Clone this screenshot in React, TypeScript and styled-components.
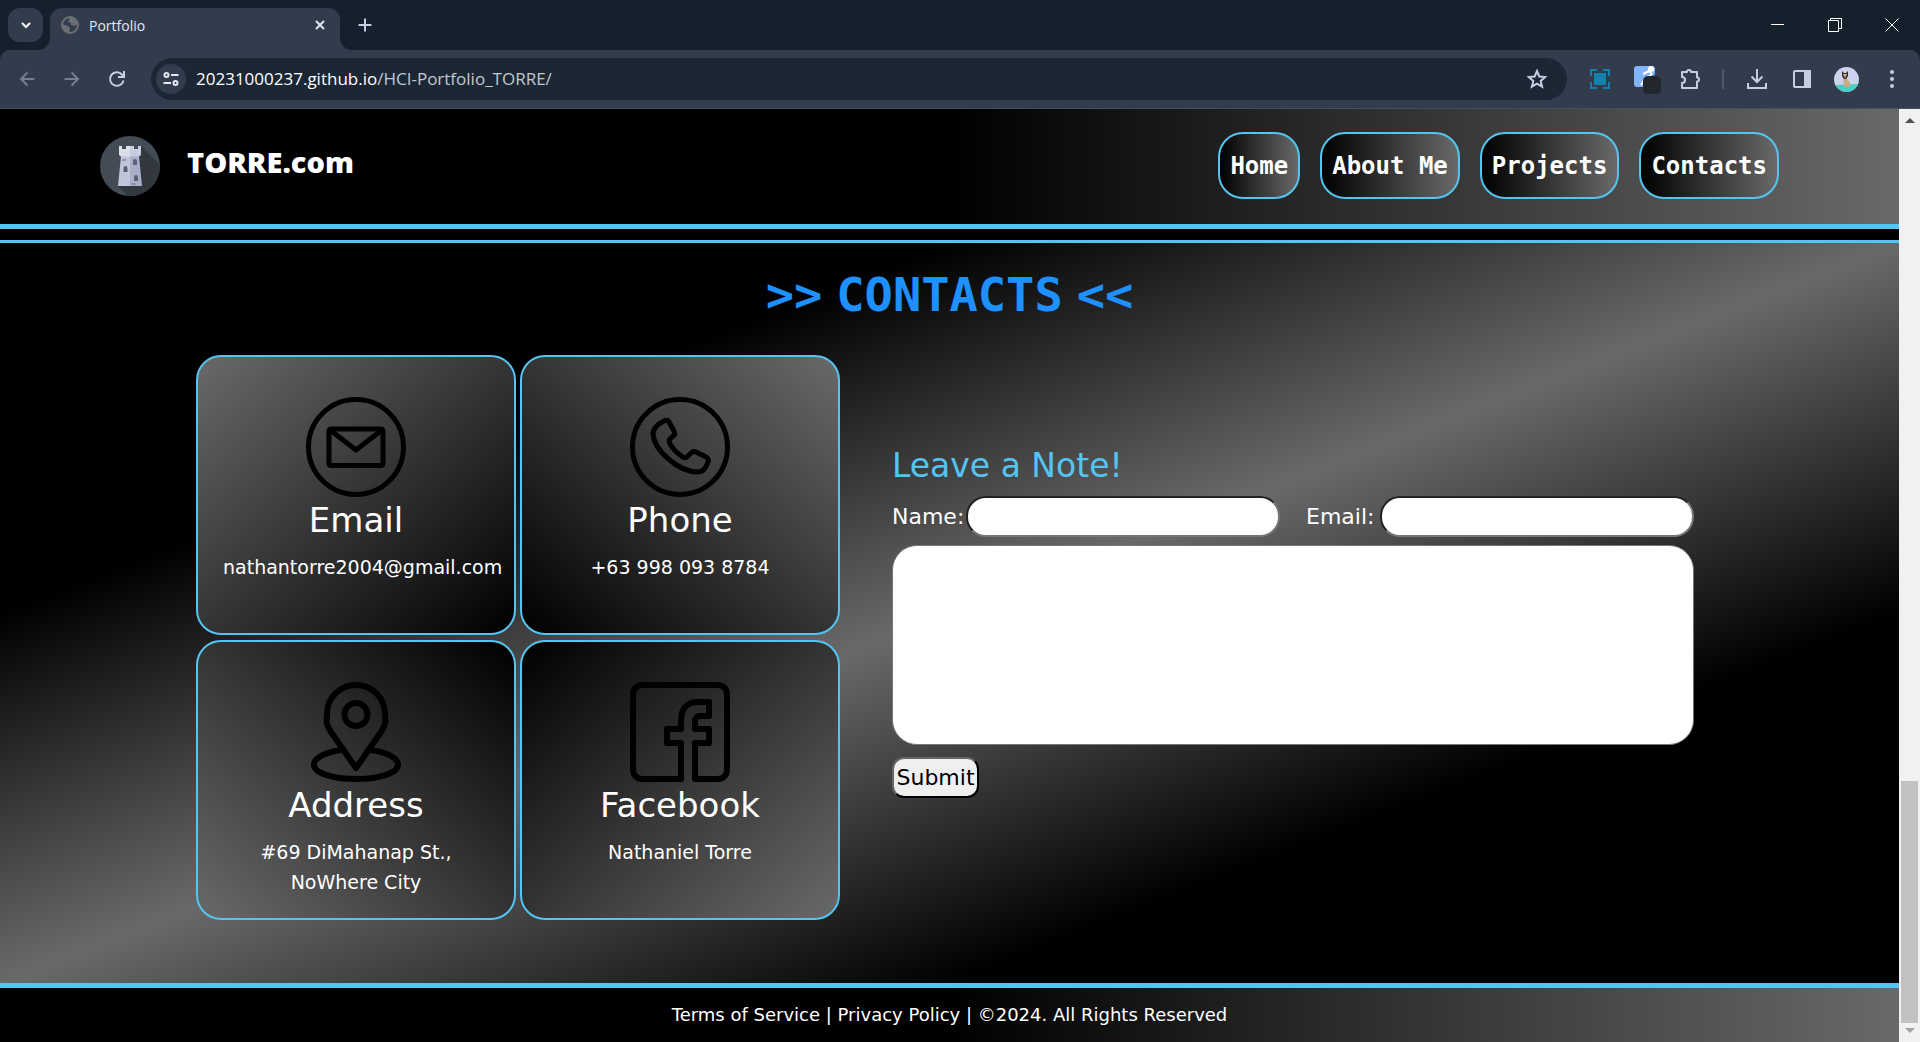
import React from "react";
import styled, { createGlobalStyle, css } from "styled-components";

const sky = "#54c5f1";
const gray = "#696969";
const pixelSans = `"DejaVu Sans", sans-serif`;
const pixelMono = `"DejaVu Sans Mono", monospace`;

const GlobalStyle = createGlobalStyle`
  * { box-sizing: border-box; }
  body { margin: 0; background: #000; }
  h1, h2, h3, p { margin: 0; font-weight: 400; }
  button, input, textarea { font: inherit; }
`;

const Window = styled.div`
  display: flex;
  flex-direction: column;
  min-height: 100vh;
  font-family: ${pixelSans};
  color: #fff;
`;

/* ---------- browser chrome ---------- */

const TabStrip = styled.div`
  display: flex;
  align-items: flex-end;
  height: 50px;
  padding-left: 8px;
  background: #15202d;
  font-family: "Open Sans", sans-serif;
`;

const PlainButton = styled.button`
  display: flex;
  align-items: center;
  justify-content: center;
  padding: 0;
  border: 0;
  background: none;
  color: #c3cfe3;
`;

const TabSearch = styled(PlainButton)`
  align-self: center;
  width: 35px;
  height: 34px;
  border-radius: 12px;
  background: #323c4d;
  color: #fff;
`;

const Tab = styled.div`
  position: relative;
  display: flex;
  align-items: center;
  width: 290px;
  height: 42px;
  margin-left: 7px;
  padding: 0 10px 8px 11px;
  border-radius: 12px 12px 0 0;
  background: #323c4d;
  &::before,
  &::after {
    content: "";
    position: absolute;
    bottom: 0;
    width: 12px;
    height: 12px;
  }
  &::before {
    left: -12px;
    background: radial-gradient(circle at 0 0, transparent 12px, #323c4d 12px);
  }
  &::after {
    right: -12px;
    background: radial-gradient(circle at 100% 0, transparent 12px, #323c4d 12px);
  }
`;

const TabTitle = styled.span`
  flex: 1;
  margin-left: 10px;
  color: #e3e8f0;
  font-size: 14px;
`;

const TabClose = styled(PlainButton)`
  width: 20px;
  height: 20px;
  color: #e3e8f0;
`;

const NewTab = styled(PlainButton)`
  align-self: center;
  width: 30px;
  height: 30px;
  margin-left: 10px;
`;

const WindowControls = styled.div`
  display: flex;
  align-self: stretch;
  margin-left: auto;
`;

const WindowButton = styled(PlainButton)`
  width: 57px;
  color: #fff;
`;

const ToolbarBack = styled.div`
  background: #15202d;
`;

const Toolbar = styled.div`
  display: flex;
  align-items: center;
  height: 59px;
  padding: 0 6px 0 12px;
  border-bottom: 1px solid #4a4e55;
  border-radius: 10px 10px 0 0;
  background: #323c4d;
`;

const NavIcons = styled.div`
  display: flex;
  gap: 15px;
`;

const NavIcon = styled(PlainButton)<{ $dim?: boolean }>`
  width: 30px;
  height: 30px;
  color: ${(p) => (p.$dim ? "#747e8f" : "#c3cfe3")};
`;

const AddressBar = styled.div`
  display: flex;
  flex: 1;
  align-items: center;
  height: 42px;
  margin: 0 10px 0 19px;
  padding: 0 20px 0 5px;
  border-radius: 21px;
  background: #1c2736;
`;

const SiteInfo = styled(PlainButton)`
  width: 30px;
  height: 30px;
  border-radius: 50%;
  background: #323c4d;
  color: #e3e8f0;
`;

const Url = styled.span`
  flex: 1;
  margin-left: 10px;
  color: #c3c8d1;
  font: 17px/24px "Open Sans", sans-serif;
  b {
    color: #fff;
    font-weight: 400;
  }
`;

const ToolIcon = styled(PlainButton)`
  width: 45px;
  height: 36px;
`;

const Divider = styled.span`
  width: 2px;
  height: 20px;
  margin: 0 10px;
  background: #4d5869;
`;

/* ---------- page ---------- */

const Viewport = styled.div`
  display: flex;
  flex: 1;
`;

const Page = styled.div`
  display: flex;
  flex: 1;
  flex-direction: column;
`;

const Header = styled.header`
  display: flex;
  align-items: center;
  justify-content: space-between;
  height: 120px;
  padding: 0 120px 2px 100px;
  border-bottom: 5px solid ${sky};
  background: linear-gradient(to right, #000 50%, ${gray});
`;

const Brand = styled.a`
  display: flex;
  align-items: center;
  gap: 27px;
  color: #fff;
  text-decoration: none;
`;

const BrandName = styled.span`
  padding-bottom: 8px;
  font: 800 29px/40px "Open Sans", sans-serif;
`;

const Nav = styled.nav`
  display: flex;
  gap: 20px;
`;

const NavLink = styled.a`
  display: flex;
  align-items: center;
  height: 67px;
  padding: 0 10px;
  border: 2px solid ${sky};
  border-radius: 25px;
  background: linear-gradient(to right, #000, ${gray});
  color: #fff;
  font: bold 24px/30px ${pixelMono};
  text-decoration: none;
`;

const Contacts = styled.main`
  flex: 1;
  margin-top: 11px;
  border-top: 3px solid ${sky};
  background: linear-gradient(to bottom right, #000 25%, ${gray} 50%, #000 75%);
`;

const Title = styled.h1`
  display: flex;
  justify-content: center;
  gap: 14px;
  padding: 22px 0 30px;
  color: #1e90ff;
  font: bold 47px/60px ${pixelMono};
`;

const Columns = styled.div`
  display: flex;
  gap: 52px;
  padding: 0 205px 63px 196px;
`;

const Cards = styled.div`
  display: grid;
  grid-template-columns: repeat(2, 320px);
  gap: 5px 4px;
`;

const Card = styled.article<{ $toward: string }>`
  height: 280px;
  padding: 40px 25px 0;
  border: 2px solid ${sky};
  border-radius: 25px;
  background: linear-gradient(${(p) => p.$toward}, ${gray}, #000);
  text-align: center;
`;

const CardTitle = styled.h2`
  font-size: 34px;
  line-height: 46px;
`;

const CardText = styled.p`
  padding-top: 9px;
  font-size: 19px;
  line-height: 30px;
  white-space: pre-line;
`;

const Form = styled.form`
  display: flex;
  flex: 1;
  flex-direction: column;
  align-items: flex-start;
  min-width: 0;
  padding-top: 86px;
`;

const FormTitle = styled.h3`
  margin-bottom: 5px;
  color: ${sky};
  font-size: 33px;
  line-height: 50px;
`;

const Fields = styled.div`
  display: flex;
  gap: 26px;
  width: 100%;
`;

const Field = styled.label`
  display: flex;
  flex: 1;
  align-items: center;
  justify-content: space-between;
  font-size: 22px;
`;

const TextInput = styled.input`
  width: 314px;
  height: 41px;
  padding: 0 14px;
  border: 2px inset #767676;
  border-radius: 20px;
  background: #fff;
`;

const Note = styled.textarea`
  width: 100%;
  height: 200px;
  margin: 8px 0 12px;
  padding: 14px;
  border: 1px solid #767676;
  border-radius: 25px;
  background: #fff;
  resize: none;
`;

const Submit = styled.button`
  width: 87px;
  height: 41px;
  padding: 0;
  border: 2px solid;
  border-color: #666 #000 #000 #666;
  border-radius: 12px;
  background: #efefef;
  color: #000;
  font-size: 22px;
`;

const Footer = styled.footer`
  padding: 12px 0;
  border-top: 5px solid ${sky};
  background: linear-gradient(to right, #000 50%, ${gray});
  font-size: 18px;
  line-height: 30px;
  text-align: center;
`;

const Scrollbar = styled.div`
  display: flex;
  flex-direction: column;
  align-items: center;
  justify-content: space-between;
  width: 21px;
  padding: 9px 0;
  background: #f1f1f1;
`;

const Thumb = styled.div`
  width: 17px;
  height: 242px;
  margin: auto 0 5px;
  background: #c1c1c1;
`;

const Arrow = styled.span<{ $down?: boolean }>`
  border: 5px solid transparent;
  ${(p) =>
    p.$down
      ? css`
          border-top-color: #a3a3a3;
          border-bottom: 0;
        `
      : css`
          border-bottom-color: #505050;
          border-top: 0;
        `}
`;

/* ---------- drawings ---------- */

const Line = styled.svg`
  display: block;
  fill: none;
  stroke: currentColor;
  stroke-width: 2;
`;

const CardIcon = styled(Line)`
  width: 100px;
  height: 100px;
  margin: 0 auto;
  color: #000;
  stroke-width: 6;
  stroke-linejoin: round;
`;

const EmailIcon = () => (
  <CardIcon viewBox="0 0 100 100">
    <circle cx="50" cy="50" r="47.5" strokeWidth="5" />
    <rect x="23" y="32" width="54" height="36.5" rx="2" strokeWidth="5" />
    <path d="M24 33l26 20 26-20" strokeWidth="5" />
  </CardIcon>
);

const PhoneIcon = () => (
  <CardIcon viewBox="0 0 100 100">
    <circle cx="50" cy="50" r="47.5" strokeWidth="5" />
    <path
      strokeWidth="5"
      d="M34 24c2-1 4-1 5 1l5 9c1 2 1 4-1 5l-3 3c-1 1-1 3 0 5 3 5 8 10 13 13 2 1 4 1 5-1l3-3c1-1 3-2 5-1l10 5c2 1 3 3 2 5-2 6-5 10-10 10C48 75 24 53 23 37c0-6 5-10 11-13z"
    />
  </CardIcon>
);

const PinIcon = () => (
  <CardIcon viewBox="0 0 100 100">
    <circle cx="50" cy="32.5" r="11.5" />
    <path d="M50 86L25 50C19 41 21 38 21 32a29 29 0 0 1 58 0c0 6 2 9-4 18z" />
    <path d="M36 68C19 70 8 76 8 82.500 8 91 26 97 50 97s42-6 42-14.500C92 76 81 70 64 68" />
  </CardIcon>
);

const FacebookIcon = () => (
  <CardIcon viewBox="0 0 100 100">
    <path d="M51 97H12a9 9 0 0 1-9-9V12a9 9 0 0 1 9-9h76a9 9 0 0 1 9 9v76a9 9 0 0 1-9 9H65V61h14V47H65V39a5 5 0 0 1 5-5h9V20H68C57 20 51 27 51 38v9H37v14h14z" />
  </CardIcon>
);

const TowerLogo = () => (
  <svg width="60" height="60" viewBox="0 0 60 60" aria-hidden="true">
    <clipPath id="badge">
      <circle cx="30" cy="30" r="30" />
    </clipPath>
    <g clipPath="url(#badge)">
      <path d="M0 0h60v60H0z" fill="#434b55" />
      <path d="M41 10l19 19v31H28L18 50z" fill="#33373e" />
      <path d="M21 20h9v30H18z" fill="#c0c5d8" />
      <path d="M30 20h9l3 30H30z" fill="#a9aec9" />
      <path d="M19 10h3v3h4v-3h4v10.500h-9L19 19z" fill="#dcdfeb" />
      <path d="M30 10h4v3h4v-3h3v9l-2 1.500h-9z" fill="#c8cce0" />
      <path
        d="M33 29v-4a2 2 0 0 1 4 0v4zM23.500 36v-4a2 2 0 0 1 4 0v4zM34 45v-4a2 2 0 0 1 4 0v4z"
        fill="#5b6175"
      />
      <path d="M31 47h5v2h-5zM22 23h4v2h-4z" fill="#9095ae" />
    </g>
  </svg>
);

const Globe = () => (
  <svg width="18" height="18" viewBox="0 0 18 18" aria-hidden="true">
    <circle cx="9" cy="9" r="8" fill="none" stroke="#6d6f73" strokeWidth="2" />
    <path d="M9 1c4 0 7 3 8 6l-3 3-4-1V7L7 6l1-2zM1 8l6 2 2 2-1 5C4 17 1 13 1 8z" fill="#6d6f73" />
  </svg>
);

const cards = [
  { title: "Email", text: "nathantorre2004@gmail.com", toward: "to bottom right", Icon: EmailIcon },
  { title: "Phone", text: "+63 998 093 8784", toward: "to bottom left", Icon: PhoneIcon },
  { title: "Address", text: "#69 DiMahanap St.,\nNoWhere City", toward: "to top right", Icon: PinIcon },
  { title: "Facebook", text: "Nathaniel Torre", toward: "to top left", Icon: FacebookIcon },
];

const links = ["Home", "About Me", "Projects", "Contacts"];

const BrowserChrome = () => (
  <>
    <TabStrip>
      <TabSearch aria-label="Search tabs">
        <Line width="12" height="12" viewBox="0 0 12 12">
          <path d="M2 4l4 4 4-4" />
        </Line>
      </TabSearch>
      <Tab>
        <Globe />
        <TabTitle>Portfolio</TabTitle>
        <TabClose aria-label="Close tab">
          <Line width="12" height="12" viewBox="0 0 12 12">
            <path d="M2 2l8 8M10 2l-8 8" />
          </Line>
        </TabClose>
      </Tab>
      <NewTab aria-label="New tab">
        <Line width="14" height="14" viewBox="0 0 14 14">
          <path d="M7 .5v13M.5 7h13" />
        </Line>
      </NewTab>
      <WindowControls>
        <WindowButton aria-label="Minimize">
          <Line width="14" height="14" viewBox="0 0 14 14">
            <path d="M0 6.500h13" strokeWidth="1" />
          </Line>
        </WindowButton>
        <WindowButton aria-label="Restore">
          <Line width="14" height="14" viewBox="0 0 14 14">
            <path d="M.5 2.500h10v11H.5zM2.500 2.500v-2h11v10h-2.500" strokeWidth="1" />
          </Line>
        </WindowButton>
        <WindowButton aria-label="Close">
          <Line width="14" height="14" viewBox="0 0 14 14">
            <path d="M.5 .5l13 13M13.500 .5l-13 13" strokeWidth="1" />
          </Line>
        </WindowButton>
      </WindowControls>
    </TabStrip>
    <ToolbarBack>
      <Toolbar>
        <NavIcons>
          <NavIcon $dim aria-label="Back">
            <Line width="16" height="16" viewBox="0 0 16 16">
              <path d="M15.500 8H2M8.500 1.500L2 8l6.500 6.500" />
            </Line>
          </NavIcon>
          <NavIcon $dim aria-label="Forward">
            <Line width="16" height="16" viewBox="0 0 16 16">
              <path d="M.5 8H14M7.500 1.500L14 8l-6.500 6.500" />
            </Line>
          </NavIcon>
          <NavIcon aria-label="Reload">
            <Line width="18" height="18" viewBox="0 0 18 18">
              <path d="M15.500 10.500A6.800 6.800 0 1 1 14 4.500l2 2M16 1v6h-6" />
            </Line>
          </NavIcon>
        </NavIcons>
        <AddressBar>
          <SiteInfo aria-label="Site information">
            <Line width="16" height="16" viewBox="0 0 16 16">
              <circle cx="3.500" cy="4" r="2" />
              <circle cx="12.500" cy="12" r="2" />
              <path d="M8 4h7.500M.5 12H8" />
            </Line>
          </SiteInfo>
          <Url>
            <b>20231000237.github.io</b>/HCI-Portfolio_TORRE/
          </Url>
          <PlainButton aria-label="Bookmark this page">
            <Line width="20" height="20" viewBox="0 0 20 20">
              <path d="M10 2l2.300 5.500 6 .5-4.600 3.900 1.400 5.800L10 14.600l-5.100 3.100 1.400-5.800L1.700 8l6-.5z" />
            </Line>
          </PlainButton>
        </AddressBar>
        <ToolIcon aria-label="Screen capture">
          <Line width="20" height="20" viewBox="0 0 20 20" color="#1480ad">
            <path d="M1 7V1h6M13 1h6v6M19 13v6h-6M7 19H1v-6" />
            <rect x="4" y="4" width="12" height="12" fill="#1480ad" stroke="none" />
          </Line>
        </ToolIcon>
        <ToolIcon aria-label="Reader extension">
          <svg width="32" height="32" viewBox="0 0 32 32">
            <rect x="5" y="3" width="21" height="21" rx="3" fill="#82b5f6" />
            <path d="M21 9l5 2v13H15z" fill="#3f83e0" />
            <circle cx="22" cy="6" r="3" fill="#fff" />
            <path d="M14 11l6-3 3 3-6 4-5 7" fill="none" stroke="#fff" strokeWidth="2" />
            <rect x="14" y="13" width="18" height="18" rx="5" fill="#22262e" />
          </svg>
        </ToolIcon>
        <ToolIcon aria-label="Extensions">
          <Line width="22" height="22" viewBox="0 0 22 22">
            <path
              strokeLinejoin="round"
              d="M3 4h5a2 2 0 0 1 4 0h6v5.500a2 2 0 0 1 0 4V20H3v-5a3 3 0 0 0 0-6z"
            />
          </Line>
        </ToolIcon>
        <Divider />
        <ToolIcon aria-label="Downloads">
          <Line width="22" height="22" viewBox="0 0 22 22">
            <path d="M11 1v13M5.500 8.500L11 14l5.500-5.500M2 15v5h18v-5" />
          </Line>
        </ToolIcon>
        <ToolIcon aria-label="Side panel">
          <Line width="20" height="20" viewBox="0 0 20 20">
            <rect x="2" y="2" width="16" height="16" rx="1" />
            <path d="M13 2h5v16h-5z" fill="currentColor" />
          </Line>
        </ToolIcon>
        <ToolIcon aria-label="Profile">
          <svg width="25" height="25" viewBox="0 0 25 25">
            <clipPath id="face">
              <circle cx="12.500" cy="12.500" r="12.500" />
            </clipPath>
            <g clipPath="url(#face)">
              <path d="M0 0h25v25H0z" fill="#cdd3ec" />
              <path d="M0 18l25-1v8H0z" fill="#46cfc4" />
              <path d="M9 10l4 1 3 5v4h-6z" fill="#c9ad8a" />
              <path d="M8 4l2 2h2l2-2v5l-2 3h-2L8 9z" fill="#3a2d2a" />
              <path d="M9 7h4l-2 4z" fill="#d9b98c" />
            </g>
          </svg>
        </ToolIcon>
        <ToolIcon aria-label="Menu">
          <svg width="4" height="18" viewBox="0 0 4 18" fill="currentColor">
            <circle cx="2" cy="2" r="2" />
            <circle cx="2" cy="9" r="2" />
            <circle cx="2" cy="16" r="2" />
          </svg>
        </ToolIcon>
      </Toolbar>
    </ToolbarBack>
  </>
);

export default function App() {
  return (
    <Window>
      <GlobalStyle />
      <BrowserChrome />
      <Viewport>
        <Page>
          <Header>
            <Brand href="#home">
              <TowerLogo />
              <BrandName>TORRE.com</BrandName>
            </Brand>
            <Nav>
              {links.map((name) => (
                <NavLink key={name} href="#">
                  {name}
                </NavLink>
              ))}
            </Nav>
          </Header>
          <Contacts>
            <Title>
              <span>&gt;&gt;</span>
              <span>CONTACTS</span>
              <span>&lt;&lt;</span>
            </Title>
            <Columns>
              <Cards>
                {cards.map(({ title, text, toward, Icon }) => (
                  <Card key={title} $toward={toward}>
                    <Icon />
                    <CardTitle>{title}</CardTitle>
                    <CardText>{text}</CardText>
                  </Card>
                ))}
              </Cards>
              <Form>
                <FormTitle>Leave a Note!</FormTitle>
                <Fields>
                  <Field>
                    Name:
                    <TextInput type="text" />
                  </Field>
                  <Field>
                    Email:
                    <TextInput type="email" />
                  </Field>
                </Fields>
                <Note aria-label="Note" />
                <Submit type="button">Submit</Submit>
              </Form>
            </Columns>
          </Contacts>
          <Footer>Terms of Service | Privacy Policy | ©2024. All Rights Reserved</Footer>
        </Page>
        <Scrollbar>
          <Arrow />
          <Thumb />
          <Arrow $down />
        </Scrollbar>
      </Viewport>
    </Window>
  );
}
